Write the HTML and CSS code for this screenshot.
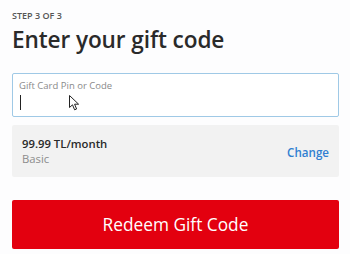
FILE: index.html
```html
<!DOCTYPE html>
<html lang="en">
<head>
<meta charset="utf-8">
<title>Enter your gift code</title>
<link rel="stylesheet" href="styles.css">
</head>
<body>
<main class="page">
  <p class="step">STEP 3 OF 3</p>
  <h1 class="title">Enter your gift code</h1>
  <label class="field">
    <span class="field-label">Gift Card Pin or Code</span>
    <span class="caret"></span>
    <svg class="pointer" width="11" height="16" viewBox="0 0 11 16" aria-hidden="true">
      <path d="M0.5 0.5 L0.5 12.5 L3.5 9.8 L5.6 14.8 L7.6 14 L5.6 9.2 L9.6 9.2 Z" fill="#fff" stroke="#222" stroke-width="1" stroke-linejoin="round"/>
    </svg>
  </label>
  <div class="plan">
    <div class="plan-info">
      <div class="price">99.99 TL/month</div>
      <div class="tier">Basic</div>
    </div>
    <a class="change" href="#">Change</a>
  </div>
  <button class="redeem" type="button">Redeem Gift Code</button>
</main>
</body>
</html>
```
FILE: styles.css
```css
html, body {
  margin: 0;
  padding: 0;
  background: #fdfdfe;
}
body {
  font-family: "Open Sans", "Noto Sans", "Liberation Sans", sans-serif;
  color: #262626;
}
.page {
  width: 327px;
  padding: 10px 0 0 12px;
  display: flex;
  flex-direction: column;
}
.step {
  margin: 0;
  font-size: 9px;
  line-height: 12px;
  font-weight: 600;
  color: #555;
}
.title {
  margin: 4px 0 0;
  font-size: 22.6px;
  line-height: 28px;
  font-weight: 600;
  color: #2a2a2a;
  letter-spacing: -0.1px;
}
.field {
  position: relative;
  margin-top: 19px;
  height: 44px;
  box-sizing: border-box;
  border: 1.5px solid #9fc9e6;
  border-radius: 2px;
  background: #fff;
  padding: 6px 0 0 6px;
  display: flex;
  flex-direction: column;
  align-items: flex-start;
}
.field-label {
  font-size: 9.5px;
  line-height: 12px;
  color: #8a8a8a;
}
.caret {
  margin: 3px 0 0 1px;
  width: 1px;
  height: 15px;
  background: #222;
}
.pointer {
  position: absolute;
  left: 56px;
  top: 21px;
}
.plan {
  margin-top: 8px;
  height: 52px;
  box-sizing: border-box;
  background: #f2f2f2;
  border-radius: 2px;
  padding: 0 10px;
  display: flex;
  align-items: center;
  justify-content: space-between;
}
.price {
  font-size: 11.3px;
  line-height: 15px;
  font-weight: 600;
  color: #2a2a2a;
}
.tier {
  font-size: 11.3px;
  line-height: 15px;
  color: #8c8c8c;
}
.change {
  font-size: 11.6px;
  font-weight: 600;
  color: #2f7fd1;
  text-decoration: none;
  margin-top: 2px;
}
.redeem {
  margin-top: 23px;
  height: 49px;
  border: 0;
  border-radius: 2px;
  background: #e3000f;
  color: #fff;
  font-family: inherit;
  font-size: 17.3px;
  font-weight: 400;
  cursor: pointer;
}
```
